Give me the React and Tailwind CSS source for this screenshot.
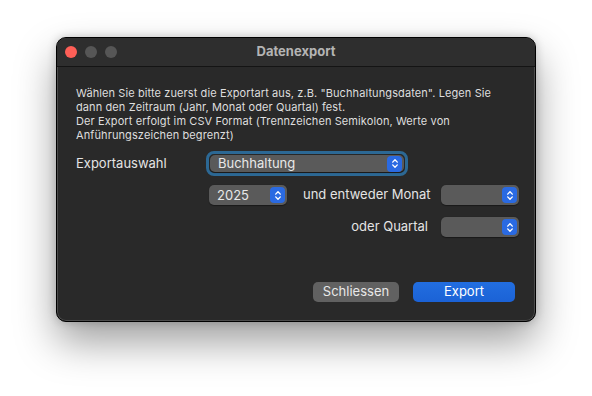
import React from 'react';

const Chevrons = () => (
  <svg viewBox="0 0 8 12" className="h-[11px] w-[8px]" fill="none" stroke="white" strokeWidth="1.5" strokeLinecap="round" strokeLinejoin="round">
    <path d="M1.5 4.5 L4 2 L6.5 4.5" />
    <path d="M1.5 7.5 L4 10 L6.5 7.5" />
  </svg>
);

const Select = ({ value, className = '' }) => (
  <div className={`flex items-center justify-between rounded-[5px] bg-[#5a5a5a] pl-[8px] pr-[2px] text-[13px] text-[#e8e8e8] shadow-[0_0.5px_1px_rgba(0,0,0,0.4)] ${className}`}>
    <span className="leading-none">{value}</span>
    <span className="grid h-[16px] w-[15px] place-items-center rounded-[4px] bg-[#2a6ae2]">
      <Chevrons />
    </span>
  </div>
);

const App = () => {
  return (
    <div className="h-[396px] w-[592px] bg-white pl-[56px] pt-[37px] font-['Inter',sans-serif]">
      <div className="h-[285px] w-[480px] overflow-hidden rounded-[10px] border border-black bg-[#292929] shadow-[inset_0_0_0_1px_rgba(255,255,255,0.16),0_20px_40px_rgba(0,0,0,0.38),0_0_10px_rgba(0,0,0,0.2)]">
        <div className="relative flex h-[29px] items-center border-b border-[#141414] bg-[#2e2e2e] pl-[8px]">
          <div className="flex gap-[8px]">
            <span className="h-[12px] w-[12px] rounded-full bg-[#fe5f57]" />
            <span className="h-[12px] w-[12px] rounded-full bg-[#565656]" />
            <span className="h-[12px] w-[12px] rounded-full bg-[#565656]" />
          </div>
          <div className="absolute inset-0 flex items-center justify-center text-[13px] font-bold text-[#b4b4b4]">
            Datenexport
          </div>
        </div>

        <div className="pl-[19px] pt-[19px]">
          <p className="text-[11px] leading-[14px] tracking-[0.1px] text-[#dedede]">
            Wählen Sie bitte zuerst die Exportart aus, z.B. "Buchhaltungsdaten". Legen Sie
            <br />
            dann den Zeitraum (Jahr, Monat oder Quartal) fest.
            <br />
            Der Export erfolgt im CSV Format (Trennzeichen Semikolon, Werte von
            <br />
            Anführungszeichen begrenzt)
          </p>

          <div className="mt-[10px] flex h-[23px] items-center">
            <span className="w-[130px] text-[13px] text-[#e4e4e4]">Exportauswahl</span>
            <div className="rounded-[8px] border-[3px] border-[#2c6894] p-px">
              <Select value="Buchhaltung" className="h-[17px] w-[194px]" />
            </div>
          </div>

          <div className="mt-[10px] flex items-center pl-[133px]">
            <Select value="2025" className="h-[20px] w-[78px]" />
            <span className="ml-[16px] text-[13px] text-[#e4e4e4]">und entweder Monat</span>
            <span className="flex-1" />
            <Select value="" className="mr-[16px] h-[20px] w-[78px]" />
          </div>

          <div className="mt-[12px] flex items-center justify-end gap-[13px] pr-[16px]">
            <span className="text-[13px] text-[#e4e4e4]">oder Quartal</span>
            <Select value="" className="h-[20px] w-[78px]" />
          </div>

          <div className="mt-[45px] flex justify-end gap-[14px] pr-[20px]">
            <button className="h-[20px] w-[86px] rounded-[5px] bg-[#616161] text-[13px] text-[#e8e8e8]">
              Schliessen
            </button>
            <button className="h-[20px] w-[102px] rounded-[5px] bg-gradient-to-b from-[#226ee0] to-[#1b62d6] text-[13px] text-white">
              Export
            </button>
          </div>
        </div>
      </div>
    </div>
  );
};

export default App;
